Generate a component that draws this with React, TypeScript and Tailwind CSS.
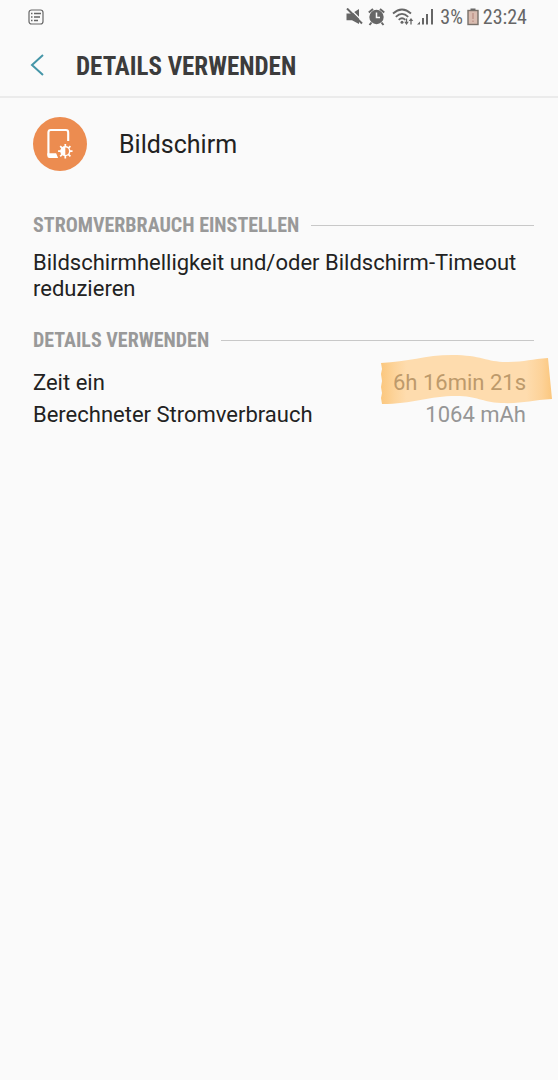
import type { ReactNode } from 'react'

const USAGE = [
  { label: 'Zeit ein', value: '6h 16min 21s', marked: true },
  { label: 'Berechneter Stromverbrauch', value: '1064 mAh', marked: false },
]

export default function App() {
  return (
    <div className="min-h-screen bg-[#fafafa] font-['Roboto',sans-serif] text-[#222222]">
      <StatusBar />
      <header className="flex h-16 items-center border-b-2 border-[#ebebeb] pl-6">
        <button type="button" aria-label="Zurück" className="flex h-10 w-13 items-center pl-1 text-[#4596a8]">
          <svg width="18" height="24" viewBox="0 0 18 24" fill="none" stroke="currentColor" strokeWidth="2">
            <path d="M15 2L4 12L15 22" />
          </svg>
        </button>
        <h1 className="pt-1 font-['Roboto_Condensed','Liberation_Sans_Narrow',sans-serif] text-[25px] font-bold text-[#3c3c3c]">
          DETAILS VERWENDEN
        </h1>
      </header>

      <main className="pr-6 pl-[33px]">
        <div className="flex items-center gap-8 pt-[19px]">
          <ScreenIcon />
          <h2 className="pt-0.5 text-[25px]">Bildschirm</h2>
        </div>

        <section className="pt-10">
          <SectionTitle>STROMVERBRAUCH EINSTELLEN</SectionTitle>
          <p className="pt-[11px] text-[22px] leading-[26px]">
            Bildschirmhelligkeit und/oder Bildschirm-Timeout reduzieren
          </p>
        </section>

        <section className="pt-6">
          <SectionTitle>DETAILS VERWENDEN</SectionTitle>
          <dl className="pt-[13px] pr-2 text-[22px] leading-8">
            {USAGE.map(row => (
              <div key={row.label} className="flex justify-between">
                <dt>{row.label}</dt>
                {row.marked ? (
                  <dd className="relative text-[#bd9a6b]">
                    <Tape />
                    <span className="relative">{row.value}</span>
                  </dd>
                ) : (
                  <dd className="text-[#969696]">{row.value}</dd>
                )}
              </div>
            ))}
          </dl>
        </section>
      </main>
    </div>
  )
}

function SectionTitle({ children }: { children: ReactNode }) {
  return (
    <div className="flex items-center gap-3">
      <h3 className="font-['Roboto_Condensed','Liberation_Sans_Narrow',sans-serif] text-[20px] leading-7 font-bold text-[#999999]">
        {children}
      </h3>
      <div className="h-px flex-1 bg-[#c8c8c8]" />
    </div>
  )
}

function StatusBar() {
  return (
    <div className="flex h-[34px] items-center justify-between pr-[31px] pl-7 text-[#666666]">
      <svg width="16" height="16" viewBox="0 0 16 16" fill="none" stroke="currentColor">
        <rect x="1" y="1" width="14" height="14" rx="2.5" strokeWidth="1.2" />
        <path d="M3 4.5h1.5M6 4.5h7M3 8h1.5M6 8h6M3 11.5h1.5M6 11.5h4" strokeWidth="1.5" />
      </svg>
      <div className="flex items-center gap-1 font-['Roboto_Condensed','Liberation_Sans_Narrow',sans-serif] text-xl">
        {/* muted speaker */}
        <svg width="18" height="18" viewBox="0 0 18 18" fill="currentColor">
          <path d="M0.500 5.500h5.500L13 1v15L6 12.200H0.500z" />
          <path d="M3.200 0L17 13.800" stroke="#fafafa" strokeWidth="1.400" />
          <path d="M1 0.500L16 15.500" stroke="currentColor" strokeWidth="2" />
        </svg>
        {/* alarm */}
        <svg width="18" height="18" viewBox="0 0 18 18" fill="currentColor" className="mr-0.5">
          <path d="M0.800 4.500L5 1M16.200 4.500L12 1M3.500 14.500L1.500 17M13.500 14.500l2 2.500" stroke="currentColor" strokeWidth="2" />
          <circle cx="8.500" cy="9" r="7.200" />
          <path d="M8.500 4.500V9.500H12" stroke="#fafafa" strokeWidth="1.500" fill="none" />
        </svg>
        {/* wifi with traffic arrows */}
        <svg width="23" height="18" viewBox="0 0 23 18" fill="none" stroke="currentColor">
          <path d="M1 5.500Q10 -2.500 19 5.500M3.800 8.800Q10 3 16.200 8.800M6.700 11.800Q10 8.800 13.300 11.800" strokeWidth="1.800" />
          <circle cx="10" cy="14.200" r="1.500" fill="currentColor" stroke="none" />
          <path d="M14.500 10.500v4M19 12v4.500" strokeWidth="1.300" />
          <path d="M12.200 13.800h4.600L14.500 17zM16.700 13h4.600L19 10z" fill="currentColor" stroke="none" />
        </svg>
        {/* signal */}
        <svg width="17" height="18" viewBox="0 0 17 18" fill="currentColor" className="-ml-0.5 mr-0.5">
          <path d="M0 16.500l3-3v3zM5 10h2v6.500H5zM9 6h2v10.500H9zM14 1h2v15.500H14z" />
        </svg>
        <span>3%</span>
        <svg width="12" height="18" viewBox="0 0 12 18">
          <path d="M3.500 0.500h5v2h-5z" fill="#666666" />
          <rect x="1" y="2.500" width="10" height="14" fill="#d9bcb0" stroke="#777069" strokeWidth="1.4" />
          <path d="M6 5v6M6 12.500v1.500" stroke="#b98d82" strokeWidth="1.2" />
        </svg>
        <span>23:24</span>
      </div>
    </div>
  )
}

function ScreenIcon() {
  return (
    <svg width="54" height="54" viewBox="0 0 56 56" fill="none">
      <circle cx="28" cy="28" r="28" fill="#ec8c50" />
      <path d="M36.500 25V16q0-2.500-2.500-2.500H18.500Q16 13.500 16 16v24" stroke="#ffffff" strokeWidth="2.200" />
      <path d="M14.900 37.500H24l2 5H17q-2.100 0-2.100-2z" fill="#ffffff" />
      <path
        d="M33.500 28v15M26 35.500h15M28.200 30.200l10.600 10.600M38.800 30.200L28.200 40.800"
        stroke="#ffffff"
        strokeWidth="1.800"
      />
      <circle cx="33.500" cy="35.500" r="5.300" fill="#ffffff" />
      <path d="M33.500 31.700a3.800 3.800 0 0 1 0 7.600z" fill="#ec8c50" />
    </svg>
  )
}

// Strip of adhesive tape laid across the highlighted value
function Tape() {
  return (
    <svg
      width="172"
      height="52"
      viewBox="0 0 172 52"
      className="absolute -top-[14px] -right-[26px] max-w-none"
      aria-hidden="true"
    >
      <defs>
        <linearGradient id="tape" x1="0" x2="1" y1="0" y2="0">
          <stop offset="0" stopColor="#fbc77e" />
          <stop offset="0.080" stopColor="#fdd49b" />
          <stop offset="0.150" stopColor="#fedcae" />
          <stop offset="0.850" stopColor="#fedcae" />
          <stop offset="0.940" stopColor="#fdd298" />
          <stop offset="1" stopColor="#fbc77e" />
        </linearGradient>
      </defs>
      <path
        d="M1 10C28 9 45 2 72 2C101 2 107 9 126 9C145 9 151 6 168 5L172 46C151 47 142 51 121 50C101 49 98 43 76 43C50 43 32 51 2 51L1 45L2 40L1 34L2 28L1 21L2 16Z"
        fill="url(#tape)"
      />
    </svg>
  )
}
